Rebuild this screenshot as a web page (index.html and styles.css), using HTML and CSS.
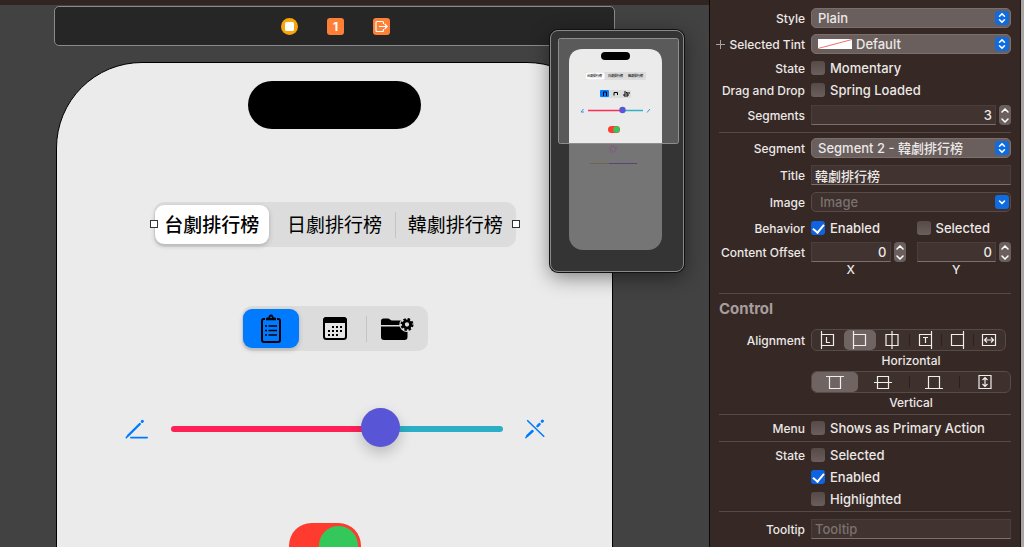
FILE: index.html
```html
<!DOCTYPE html>
<html lang="zh-Hant">
<head>
<meta charset="utf-8">
<meta name="viewport" content="width=device-width, initial-scale=1">
<title>Interface Builder</title>
<link rel="stylesheet" href="styles.css">
</head>
<body>
<main class="canvas">
  <div class="scene-bar">
    <svg width="17" height="17" viewBox="0 0 17 17" role="img" aria-label="View Controller"><circle cx="8.500" cy="8.500" r="8.500" fill="#f7a50a"/><rect x="4" y="4" width="9" height="9" rx="1.500" fill="#fff"/></svg>
    <span class="responder">1</span>
    <svg width="17" height="17" viewBox="0 0 17 17" role="img" aria-label="Exit"><rect width="17" height="17" rx="3" fill="#fd8036"/><path d="M10.500 6V4.500q0-1-1-1H4q-1 0-1 1v8q0 1 1 1h5.500q1 0 1-1V11M6 8.500h8M11.700 6l2.500 2.500-2.500 2.500" fill="none" stroke="#fff" stroke-width="1.200"/></svg>
  </div>

  <div class="phone">
    <div class="island"></div>

    <div class="segmented text-segments">
      <i class="handle handle-left"></i>
      <button class="segment chosen">台劇排行榜</button>
      <button class="segment">日劇排行榜</button>
      <button class="segment divided">韓劇排行榜</button>
      <i class="handle handle-right"></i>
    </div>

    <div class="segmented icon-segments">
      <button class="segment chosen blue" aria-label="Clipboard">
        <svg width="22" height="30" viewBox="0 0 22 30"><path d="M5 5H3.800Q2 5 2 7v19q0 2 2 2h14q2 0 2-2V7q0-2-1.800-2H17" fill="none" stroke="#000" stroke-width="2"/><path d="M6 6.300V4.800Q6 3.500 7.500 3.500h1Q8.700.600 11 .600T13.500 3.500h1Q16 3.500 16 4.800v1.500z"/><circle cx="11" cy="3.300" r=".900" fill="#007aff"/><path d="M5 12h2M5 16.500h2M5 21h2M8.500 12H17M8.500 16.500H17M8.500 21H17" stroke="#000" stroke-width="1.400"/></svg>
      </button>
      <button class="segment" aria-label="Calendar">
        <svg width="24" height="24" viewBox="0 0 24 24"><rect x="1" y="1" width="22" height="21" rx="2.500" fill="#e6e6e6" stroke="#000" stroke-width="2"/><path d="M0 6V3.500Q0 0 3.500 0h17Q24 0 24 3.500V6z"/><path d="M9 10h11M5 14h15M5 18h11" stroke="#000" stroke-width="2" stroke-dasharray="2 2"/></svg>
      </button>
      <button class="segment divided" aria-label="Folder settings">
        <svg width="34" height="26" viewBox="0 0 34 26"><path d="M1 9V5q0-2.500 2.500-2.500H8q1 0 2 1t2 1h12Q26.500 4.500 26.500 7v2z"/><path d="M1 10.500h26.500V21q0 3-3 3H4q-3 0-3-3z"/><circle cx="27" cy="8.500" r="7.600" fill="#dcdcdc"/><circle cx="27" cy="8.500" r="5.400" fill="none" stroke="#000" stroke-width="2.200" stroke-dasharray="2.400 1.841"/><circle cx="27" cy="8.500" r="3.600" fill="none" stroke="#000" stroke-width="2.900"/></svg>
      </button>
    </div>

    <div class="slider-row">
      <svg width="24" height="20" viewBox="0 0 24 20" fill="none" stroke="#007aff" stroke-linecap="round"><path d="M5.800 18.600h16.400" stroke-width="1.600"/><path d="M3.200 16.500 14.800 5" stroke-width="2.400"/><path d="M17.200 2.500l.2-.2" stroke-width="3"/><path d="M1.300 18.600l1.900-2.100" stroke-width="1.600"/></svg>
      <input class="slider" type="range" min="0" max="100" value="65" aria-label="Value">
      <svg width="20" height="20" viewBox="0 0 20 20" fill="none" stroke="#007aff" stroke-linecap="round"><path d="M2.500 16.700 7.500 12M12.500 7.200l2-2" stroke-width="2.500"/><path d="M17.200 2.300l.2-.2" stroke-width="3"/><path d="M1 18.600l1.500-1.900M2.700 1.700l16 15.500" stroke-width="1.600"/></svg>
    </div>

    <input class="switch" type="checkbox" role="switch" checked aria-label="Switch">
  </div>

  <div class="minimap">
    <svg width="132" height="240" viewBox="0 0 132 240" role="img" aria-label="Canvas overview">
      <rect x="7.500" y="7.500" width="120" height="105" rx="2" fill="#5a5a5a"/>
      <rect x="18" y="18" width="93" height="201" rx="14" fill="#757575"/>
      <path d="M18 113V32Q18 18 32 18h65q14 0 14 14v81z" fill="#ebebeb"/>
      <rect x="50" y="21" width="29" height="8" rx="4" fill="#000"/>
      <rect x="34" y="41" width="61" height="8" rx="1.500" fill="#dcdcdc"/><rect x="34.500" y="41.500" width="19" height="7" rx="1.500" fill="#fff"/>
      <g class="mini-text"><text x="36" y="46">台劇排行榜</text><text x="57" y="46">日劇排行榜</text><text x="77" y="46">韓劇排行榜</text></g>
      <rect x="49" y="59" width="31" height="8" rx="1.500" fill="#dcdcdc"/><rect x="49" y="59" width="9" height="7" rx="1" fill="#007aff"/>
      <path d="M52.500 65v-4h3v4M63 64.500v-3h3.500v2.500M73 61h2l1 1h3M73 63h4v2h-4z" fill="none" stroke="#000"/>
      <path d="M37 79.500h35" stroke="#ff2d55" stroke-width="1.500"/><path d="M72 79.500h20" stroke="#30b0c7" stroke-width="1.500"/><circle cx="71.500" cy="79" r="3.200" fill="#5856d6"/>
      <path d="M32.500 78l-2.500 3h3M99 78l-3 3.500" stroke="#3a90f0" fill="none"/>
      <rect x="57" y="95" width="12" height="7" rx="3.500" fill="#ff3b30"/><circle cx="65.500" cy="98.500" r="3.300" fill="#34c759"/>
      <circle cx="62" cy="118" r="2.800" fill="none" stroke="#87508b" stroke-width="2" stroke-dasharray="1 1.200"/>
      <path d="M39 132.500h19" stroke="#756443"/><path d="M58 132.500h28" stroke="#5a437a"/>
      <rect x="7.500" y="7.500" width="120" height="105" rx="2" fill="none" stroke="#8e8e8e"/>
    </svg>
  </div>
</main>

<aside class="inspector">
  <section class="group group-first">
    <div class="row">
      <label class="name" for="style">Style</label>
      <div class="popup"><select id="style"><option>Plain</option></select><span class="arrows"><svg width="14" height="14" viewBox="0 0 14 14"><path d="M4.500 5.300 7 2.900l2.500 2.400M4.500 8.700 7 11.100l2.500-2.400"/></svg></span></div>
    </div>
    <div class="row">
      <label class="name" for="tint"><svg class="plus" width="9" height="9" viewBox="0 0 9 9"><path d="M4.500 0v9M0 4.500h9"/></svg>Selected Tint</label>
      <div class="popup tint"><select id="tint"><option>Default</option></select><svg class="swatch" width="34" height="10" viewBox="0 0 34 10"><rect width="34" height="10" fill="#fff"/><path d="M0 9.500 34 .500" stroke="#f0706c"/></svg><span class="arrows"><svg width="14" height="14" viewBox="0 0 14 14"><path d="M4.500 5.300 7 2.900l2.500 2.400M4.500 8.700 7 11.100l2.500-2.400"/></svg></span></div>
    </div>
    <div class="row tight"><span class="name">State</span><label class="check"><input type="checkbox">Momentary</label></div>
    <div class="row tight"><span class="name">Drag and Drop</span><label class="check"><input type="checkbox">Spring Loaded</label></div>
    <div class="row roomy">
      <label class="name" for="segments">Segments</label>
      <div class="number"><input class="field" id="segments" type="text" value="3"><span class="stepper"><button aria-label="Increase"><svg width="8" height="5" viewBox="0 0 8 5"><path d="M1 4l3-3 3 3"/></svg></button><button aria-label="Decrease"><svg width="8" height="5" viewBox="0 0 8 5"><path d="M1 1l3 3 3-3"/></svg></button></span></div>
    </div>
  </section>

  <section class="group group-segment">
    <div class="row">
      <label class="name" for="segment">Segment</label>
      <div class="popup"><select id="segment"><option>Segment 2 - 韓劇排行榜</option></select><span class="arrows"><svg width="14" height="14" viewBox="0 0 14 14"><path d="M4.500 5.300 7 2.900l2.500 2.400M4.500 8.700 7 11.100l2.500-2.400"/></svg></span></div>
    </div>
    <div class="row roomy"><label class="name" for="title">Title</label><input class="field" id="title" type="text" value="韓劇排行榜"></div>
    <div class="row">
      <label class="name" for="image">Image</label>
      <div class="popup combo"><input id="image" type="text" placeholder="Image"><span class="arrows"><svg width="14" height="14" viewBox="0 0 14 14"><path d="M4.500 6 7 8.400 9.500 6"/></svg></span></div>
    </div>
    <div class="row">
      <span class="name">Behavior</span>
      <div class="halves"><label class="check"><input type="checkbox" checked>Enabled</label><label class="check"><input type="checkbox">Selected</label></div>
    </div>
    <div class="row tight">
      <span class="name">Content Offset</span>
      <div class="halves">
        <div class="number"><input class="field" id="x" type="text" value="0"><span class="stepper"><button aria-label="Increase X"><svg width="8" height="5" viewBox="0 0 8 5"><path d="M1 4l3-3 3 3"/></svg></button><button aria-label="Decrease X"><svg width="8" height="5" viewBox="0 0 8 5"><path d="M1 1l3 3 3-3"/></svg></button></span></div>
        <div class="number"><input class="field" id="y" type="text" value="0"><span class="stepper"><button aria-label="Increase Y"><svg width="8" height="5" viewBox="0 0 8 5"><path d="M1 4l3-3 3 3"/></svg></button><button aria-label="Decrease Y"><svg width="8" height="5" viewBox="0 0 8 5"><path d="M1 1l3 3 3-3"/></svg></button></span></div>
      </div>
    </div>
    <div class="row caption"><div class="halves axis"><label for="x">X</label><label for="y">Y</label></div></div>
  </section>

  <section class="group group-control">
    <h2>Control</h2>
    <div class="row roomy">
      <span class="name">Alignment</span>
      <div class="picker horizontal">
        <button aria-label="Leading"><svg width="18" height="18" viewBox="0 0 18 18"><path d="M2.500 0v18M2.500 3.500h12v11h-12M7.500 6v5.500h3.500"/></svg></button>
        <button class="on" aria-label="Left"><svg width="18" height="18" viewBox="0 0 18 18"><path d="M2.500 0v18M2.500 3.500h12v11h-12"/></svg></button>
        <button aria-label="Center"><svg width="18" height="18" viewBox="0 0 18 18"><path d="M9 0v18M3 3.500h12v11H3z"/></svg></button>
        <button class="split" aria-label="Trailing"><svg width="18" height="18" viewBox="0 0 18 18"><path d="M15.500 0v18M15.500 3.500h-12v11h12M7 6.500h5M9.500 6.500v5.500"/></svg></button>
        <button class="split" aria-label="Right"><svg width="18" height="18" viewBox="0 0 18 18"><path d="M15.500 0v18M15.500 3.500h-12v11h12"/></svg></button>
        <button class="split" aria-label="Fill"><svg width="18" height="18" viewBox="0 0 18 18"><path d="M2.500 3.500h13v11h-13zM4.500 9h9M7 6.500 4.500 9 7 11.500M11 6.500 13.500 9 11 11.500"/></svg></button>
      </div>
    </div>
    <div class="row caption"><span class="under">Horizontal</span></div>
    <div class="row roomy">
      <div class="picker vertical">
        <button class="on" aria-label="Top"><svg width="18" height="18" viewBox="0 0 18 18"><path d="M0 3.500h18M3.500 3.500v12h11v-12"/></svg></button>
        <button aria-label="Middle"><svg width="18" height="18" viewBox="0 0 18 18"><path d="M0 9.500h18M3.500 3.500h11v12h-11z"/></svg></button>
        <button class="split" aria-label="Bottom"><svg width="18" height="18" viewBox="0 0 18 18"><path d="M0 15.500h18M3.500 15.500v-12h11v12"/></svg></button>
        <button class="split" aria-label="Fill vertically"><svg width="18" height="18" viewBox="0 0 18 18"><path d="M3 2.500h12v13H3zM9 4.500v9M6.500 7 9 4.500 11.500 7M6.500 11 9 13.500 11.500 11"/></svg></button>
      </div>
    </div>
    <div class="row caption"><span class="under">Vertical</span></div>
  </section>

  <section class="group"><div class="row"><span class="name">Menu</span><label class="check"><input type="checkbox">Shows as Primary Action</label></div></section>

  <section class="group group-state">
    <div class="row tight"><span class="name">State</span><label class="check"><input type="checkbox">Selected</label></div>
    <div class="row tight"><label class="check"><input type="checkbox" checked>Enabled</label></div>
    <div class="row tight"><label class="check"><input type="checkbox">Highlighted</label></div>
  </section>

  <section class="group group-last"><div class="row roomy"><label class="name" for="tooltip">Tooltip</label><input class="field" id="tooltip" type="text" placeholder="Tooltip"></div></section>
</aside>
</body>
</html>
```

FILE: styles.css
```css
* { box-sizing: border-box; }

body {
  margin: 0;
  height: 100vh;
  overflow: hidden;
  display: grid;
  grid-template-columns: 1fr 315px;
  background: #362825;
  color: #ebe8e7;
  font-family: Inter, "Noto Sans CJK TC", sans-serif;
  font-size: 13px;
}

button, input, select { font: inherit; color: inherit; }
button { padding: 0; border: 0; background: none; }
svg { display: block; flex: none; }

/* Canvas */
.canvas {
  position: relative;
  min-width: 0;
  overflow: hidden;
  display: flex;
  flex-direction: column;
  border-top: 5px solid #302523;
  background: #424242;
}

.scene-bar {
  display: flex;
  flex: none;
  align-items: center;
  justify-content: center;
  gap: 29px;
  height: 40px;
  margin: 1px 94px 16px 54px;
  padding-left: 2px;
  border: 1px solid #8a8a8a;
  border-radius: 5px;
  background: #262626;
}

.responder {
  width: 17px;
  border-radius: 3px;
  background: #fd8036;
  color: #fff;
  font-size: 12px;
  font-weight: 700;
  line-height: 17px;
  text-align: center;
}

.phone {
  flex: 1 0 600px;
  display: flex;
  flex-direction: column;
  align-items: center;
  margin: 0 96px 0 56px;
  padding-top: 18px;
  border: 1px solid #000;
  border-radius: 86px 86px 0 0;
  background: #ebebeb;
}

.island {
  width: 173px;
  height: 48px;
  margin-bottom: 73px;
  border-radius: 24px;
  background: #000;
}

.segmented {
  position: relative;
  display: grid;
  grid-template-columns: repeat(3, 1fr);
  height: 45px;
  border-radius: 10px;
  background: #dcdcdc;
  color: #000;
}

.text-segments {
  width: 362px;
  margin-bottom: 59px;
  font-family: "Noto Sans CJK TC", sans-serif;
  font-size: 19px;
}

.icon-segments { width: 186px; margin-bottom: 57px; }
.segment { display: flex; align-items: center; justify-content: center; }
.text-segments .segment { padding-bottom: 2px; }

.chosen {
  margin: 3px 5px 3px 1px;
  border-radius: 9px;
  background: #fff;
  box-shadow: 0 2px 5px #0003;
  font-weight: 500;
}

.blue { background: #007aff; }

.divided {
  background: linear-gradient(#c4c4c6, #c4c4c6) left center / 1px 26px no-repeat;
}

.handle {
  position: absolute;
  top: 18px;
  width: 8px;
  height: 8px;
  border: 1px solid #333;
  background: #fff;
}

.handle-left { left: -4px; }
.handle-right { right: -4px; }

.slider-row {
  display: flex;
  align-items: center;
  gap: 22px;
  width: 420px;
  height: 41px;
  margin-bottom: 74px;
}

.slider {
  flex: 1;
  min-width: 0;
  height: 41px;
  margin: 0;
  appearance: none;
  background: none;
}

.slider::-webkit-slider-runnable-track {
  height: 6px;
  border-radius: 3px;
  background: linear-gradient(90deg, #ff2056 63%, #2cafc6 63%);
}

.slider::-webkit-slider-thumb {
  appearance: none;
  width: 39px;
  height: 39px;
  margin-top: -18px;
  border-radius: 50%;
  background: #5856d6;
  box-shadow: 0 6px 14px #0003;
}

.switch {
  display: flex;
  justify-content: flex-end;
  width: 72px;
  height: 45px;
  margin: 0 20px 0 0;
  padding: 3px;
  appearance: none;
  border-radius: 23px;
  background: #ff3b30;
}

.switch::before {
  content: "";
  width: 39px;
  height: 39px;
  border-radius: 50%;
  background: #34c759;
}

.minimap {
  position: absolute;
  top: 25px;
  right: 25px;
  border: 1px solid #8a8a8a;
  border-radius: 8px;
  background: #343434;
  box-shadow: 0 0 0 1px #111, 0 5px 20px #0007;
}

.mini-text {
  font-family: "Noto Sans CJK TC", sans-serif;
  font-size: 3px;
  font-weight: 500;
}

/* Inspector */
.inspector {
  min-width: 0;
  overflow: hidden;
  padding: 0 10px 0 9px;
  border-left: 1px solid #0c0908;
  border-right: 3px solid #aaa6a5;
  box-shadow: inset -1px 0 #1c1513;
  font-weight: 500;
}

.group { border-bottom: 1px solid #564a47; }
.group-first { padding: 5px 0 3px; }
.group-segment { padding: 2px 0 16px; }
.group-control { padding-bottom: 4px; }
.group-state { padding: 2px 0 1px; }
.group-last { padding-top: 3px; border: 0; }

.row {
  display: grid;
  grid-template-columns: 86px 1fr;
  column-gap: 6px;
  align-items: center;
  height: 26px;
}

.row > :not(.name) { grid-column: 2; }
.tight { height: 22px; }
.roomy { height: 28px; }
.caption { height: 14px; font-size: 12px; line-height: 14px; }

.name {
  display: flex;
  align-items: center;
  justify-content: flex-end;
  gap: 4px;
  font-size: 12px;
  white-space: nowrap;
}

.plus { fill: none; stroke: #a9a19f; }

.popup { position: relative; display: flex; height: 20px; }

.popup select, .popup input {
  width: 100%;
  height: 20px;
  padding: 0 24px 0 6px;
  appearance: none;
  border: 1px solid #7a6f6d;
  border-radius: 5px;
  outline: 0;
  background: #6a5f5d;
}

.popup.tint select { padding-left: 44px; }
.popup.combo input { padding-left: 8px; border-color: #574b48; background: #3d302d; }
.swatch { position: absolute; top: 5px; left: 7px; }

.arrows {
  position: absolute;
  top: 3px;
  right: 2px;
  border-radius: 3px;
  background: #0f6ce0;
  pointer-events: none;
}

.arrows path, .stepper path {
  fill: none;
  stroke: #fff;
  stroke-width: 1.5;
  stroke-linecap: round;
}

::placeholder { color: #7b716f; opacity: 1; }

.field {
  width: 100%;
  min-width: 0;
  height: 20px;
  padding: 0 3px;
  border: 1px solid #48403d;
  border-bottom-color: #7b706e;
  border-radius: 0;
  outline: 0;
  background: #403330;
}

.number { display: flex; align-items: center; gap: 3px; min-width: 0; }
.number .field { text-align: right; }

.stepper {
  display: grid;
  flex: none;
  width: 12px;
  height: 20px;
  border-radius: 4px;
  background: #6a5f5d;
}

.stepper button { display: grid; place-items: center; }

.halves { display: grid; grid-template-columns: 1fr 1fr; gap: 11px; }
.axis { text-align: center; }
.axis label { padding-right: 15px; }

.check { display: flex; align-items: center; gap: 5px; white-space: nowrap; }

.check input {
  display: grid;
  place-items: center;
  flex: none;
  width: 14px;
  height: 14px;
  margin: 0;
  appearance: none;
  border-radius: 3px;
  background: linear-gradient(#564a47, #6a5f5d);
}

.check input:checked { background: #0f62e0; }

.check input:checked::before {
  content: "";
  width: 5px;
  height: 9px;
  margin-bottom: 2px;
  border: solid #fff;
  border-width: 0 2px 2px 0;
  transform: rotate(40deg);
}

h2 {
  margin: 0 0 2px;
  color: #a69e9c;
  font-size: 15px;
  font-weight: 700;
  line-height: 30px;
}

.under { text-align: center; }

.picker {
  display: grid;
  grid-auto-columns: 1fr;
  grid-auto-flow: column;
  height: 22px;
  border: 1px solid #574b48;
  border-radius: 6px;
  background: #3d302d;
}

.horizontal { margin-right: 5px; }
.vertical { grid-template-columns: 46px; }
.picker button { display: grid; place-items: center; border-radius: 5px; }
.picker path { fill: none; stroke: #f0eeed; stroke-width: 1.2; }
.picker .on { background: #6f6462; }
.picker .split { background: linear-gradient(#2c201e, #2c201e) left center / 1px 12px no-repeat; }
```
